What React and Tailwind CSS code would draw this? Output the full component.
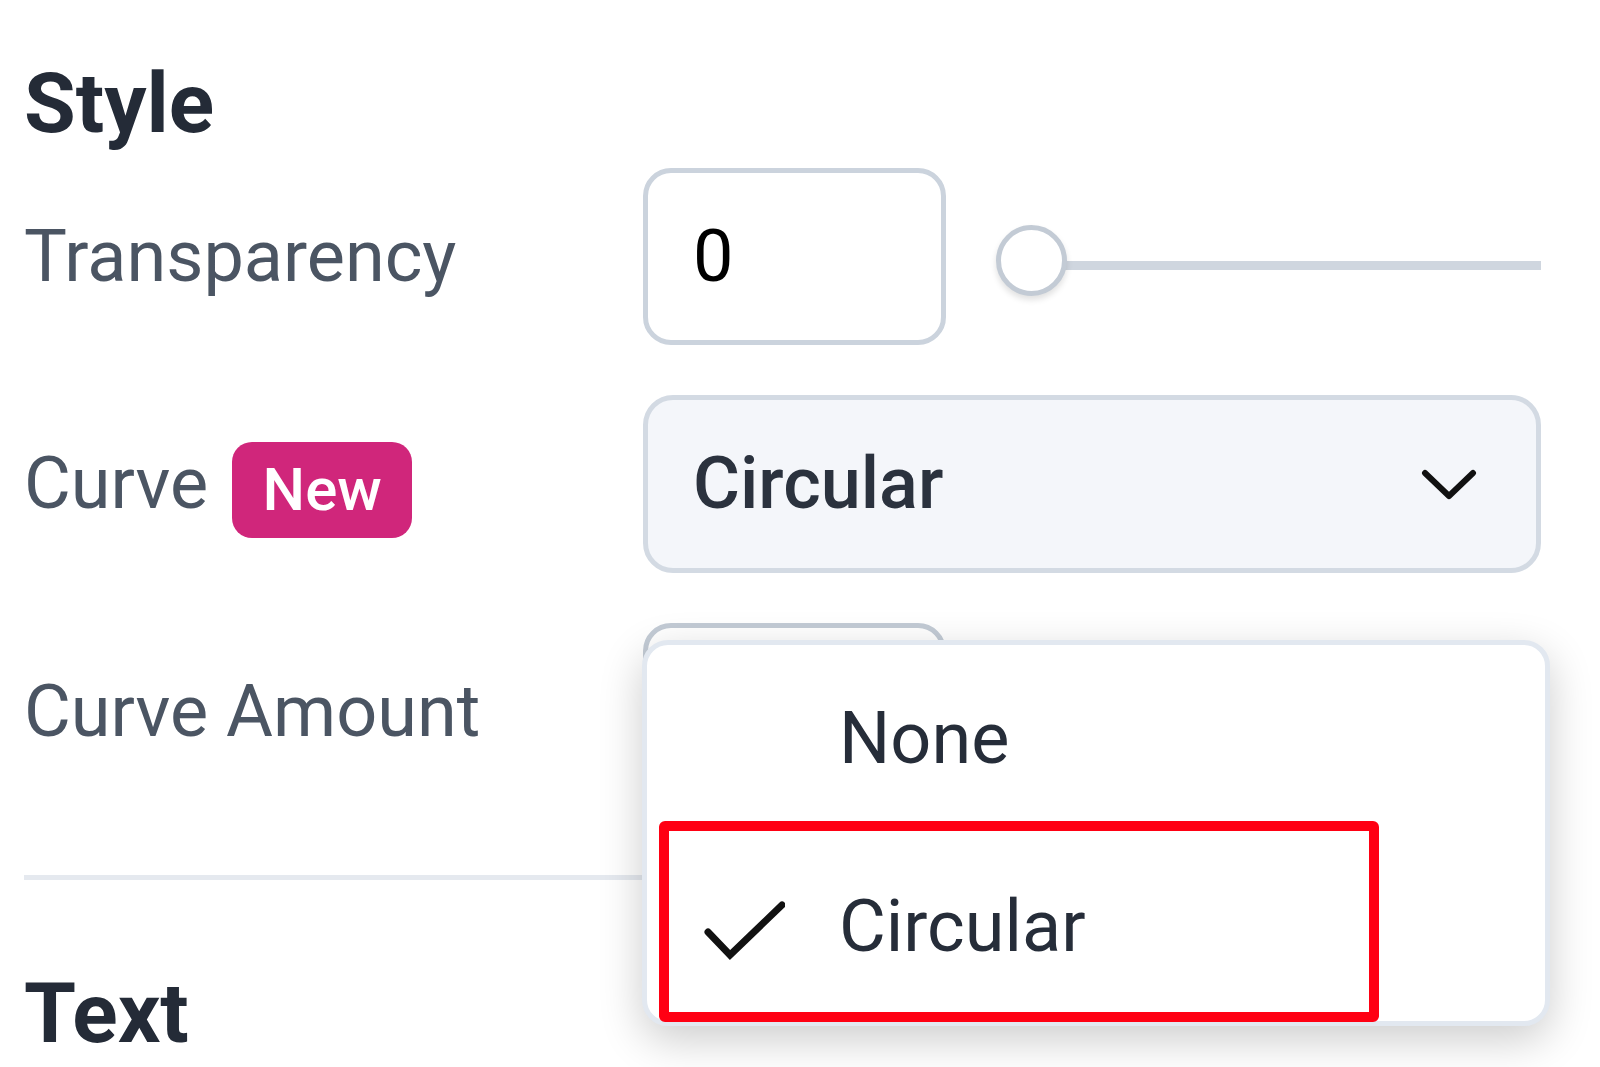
import React from 'react'

// chevron for the select trigger
function Chevron() {
  return (
    <svg width="56" height="32" viewBox="0 0 56 32" fill="none">
      <polyline points="4,5 28,28 52,5" stroke="#111" strokeWidth="6" strokeLinecap="round" strokeLinejoin="round" />
    </svg>
  )
}

function Check() {
  return (
    <svg width="82" height="60" viewBox="0 0 82 60" className="mt-[6px]" fill="none">
      <polyline points="5,32 27,55 79,5" stroke="#111" strokeWidth="7" strokeLinecap="round" strokeLinejoin="miter" />
    </svg>
  )
}

function Row({ label, children, h = 'h-[177px]' }) {
  return (
    <div className={'flex items-center ' + h}>
      <div className="w-[619px] shrink-0 flex items-center">{label}</div>
      <div className="flex-1 flex items-center h-full">{children}</div>
    </div>
  )
}

export default function App() {
  return (
    <div className="min-h-screen bg-white pt-[62px] pl-[24px] pr-[59px] font-['Roboto',sans-serif]">
      <h2 className="text-[84px] leading-[84px] font-bold text-[#242b37]">Style</h2>

      <div className="mt-[22px] flex flex-col gap-[50px]">
        {/* Transparency */}
        <Row label={<span className="text-[72px] leading-none text-[#4b5563]">Transparency</span>}>
          <input
            readOnly
            value="0"
            className="w-[303px] h-[177px] border-[5px] border-[#cbd3dd] rounded-[28px] bg-white pl-[45px] text-[72px] text-black outline-none"
          />
          <div className="relative ml-[50px] mt-[8px] flex-1 h-[71px]">
            <div className="absolute left-[35px] right-0 top-[36px] h-[9px] bg-[#cfd6df]" />
            <div className="absolute left-0 top-0 w-[71px] h-[71px] rounded-full border-[5px] border-[#c3cbd5] bg-white shadow-[0_4px_6px_rgba(0,0,0,0.12)]" />
          </div>
        </Row>

        {/* Curve */}
        <Row
          h="h-[178px]"
          label={
            <div className="flex items-center gap-[24px]">
              <span className="text-[72px] leading-none text-[#4b5563]">Curve</span>
              <span className="mt-[12px] w-[180px] h-[96px] rounded-[20px] bg-[#d0267b] text-white text-[60px] leading-none font-medium flex items-center justify-center">
                New
              </span>
            </div>
          }
        >
          <div className="relative w-full h-[178px]">
            <div className="w-full h-full border-[5px] border-[#d3dae3] rounded-[30px] bg-[#f4f6fa] pl-[45px] pr-[59px] flex items-center justify-between">
              <span className="text-[72px] leading-none font-medium text-[#2b323e]">Circular</span>
              <Chevron />
            </div>

            {/* open dropdown */}
            <div className="absolute z-10 left-[-1px] top-[245px] w-[908px] border-[5px] border-[#e2e8f0] rounded-[26px] bg-white shadow-[0_14px_44px_rgba(0,0,0,0.2)]">
              <div className="h-[188px] flex items-center pl-[56px]">
                <div className="w-[82px]" />
                <span className="ml-[54px] text-[72px] leading-none text-[#262d39]">None</span>
              </div>
              <div className="h-[188px] flex items-center pl-[56px]">
                <Check />
                <span className="ml-[54px] text-[72px] leading-none text-[#262d39]">Circular</span>
              </div>
              {/* red highlight annotation */}
              <div className="absolute left-[12px] top-[176px] w-[720px] h-[201px] border-[10px] border-[#ff0013] rounded-[6px]" />
            </div>
          </div>
        </Row>

        {/* Curve Amount */}
        <Row label={<span className="text-[72px] leading-none text-[#4b5563]">Curve Amount</span>}>
          <input
            readOnly
            value=""
            className="w-[303px] h-[177px] border-[5px] border-[#c3cbd5] rounded-[28px] bg-white pl-[45px] text-[72px] text-black outline-none"
          />
        </Row>
      </div>

      <div className="mt-[75px] h-[5px] bg-[#e5e9ef]" />

      <h2 className="mt-[92px] text-[84px] leading-[84px] font-bold text-[#242b37]">Text</h2>
    </div>
  )
}
